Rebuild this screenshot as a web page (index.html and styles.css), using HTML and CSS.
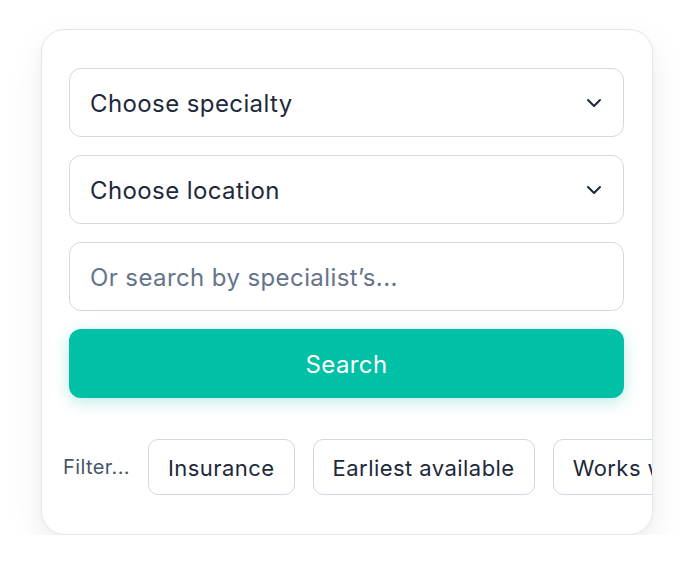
FILE: index.html
```html
<!DOCTYPE html>
<html>
<head>
<meta charset="utf-8">
<link rel="stylesheet" href="styles.css">
</head>
<body>
<div class="card">
  <div class="field select">
    <span class="value">Choose specialty</span>
    <svg class="chev" width="16" height="10" viewBox="0 0 16 10"><path d="M2 2l6 6 6-6" fill="none" stroke="#1e293b" stroke-width="2" stroke-linecap="round" stroke-linejoin="round"/></svg>
  </div>
  <div class="field select">
    <span class="value">Choose location</span>
    <svg class="chev" width="16" height="10" viewBox="0 0 16 10"><path d="M2 2l6 6 6-6" fill="none" stroke="#1e293b" stroke-width="2" stroke-linecap="round" stroke-linejoin="round"/></svg>
  </div>
  <div class="field">
    <span class="placeholder">Or search by specialist’s...</span>
  </div>
  <button class="search">Search</button>
  <div class="filters">
    <span class="label">Filter...</span>
    <span class="chip">Insurance</span>
    <span class="chip">Earliest available</span>
    <span class="chip">Works with children</span>
  </div>
</div>
</body>
</html>
```
FILE: styles.css
```css
* { box-sizing: border-box; }
html, body { margin: 0; background: #fff; }
body {
  font-family: Inter, "Noto Sans", sans-serif;
  padding: 29px 0 0 41px;
}
.card {
  width: 612px;
  height: 506px;
  border: 1.5px solid #e2e8f0;
  border-radius: 24px;
  background: #fff;
  padding: 38px 28px 0 27px;
  display: flex;
  flex-direction: column;
  gap: 18px;
  overflow: hidden;
  box-shadow: 0 14px 36px rgba(15, 23, 42, 0.07), 0 2px 8px rgba(15, 23, 42, 0.03);
}
.field {
  height: 69px;
  border: 1.5px solid #d1d9e4;
  border-radius: 12px;
  display: flex;
  align-items: center;
  justify-content: space-between;
  padding: 2px 21px 0 20px;
  font-size: 24px;
  letter-spacing: 0.4px;
  color: #1e293b;
  flex-shrink: 0;
}
.chev { margin-top: -2px; }
.placeholder { color: #64748b; }
.search {
  height: 69px;
  flex-shrink: 0;
  border: none;
  border-radius: 12px;
  background: #00c0a5;
  color: #fff;
  font-family: inherit;
  font-size: 24px;
  letter-spacing: 0.4px;
  padding-top: 2px;
  box-shadow: 0 4px 16px rgba(0, 192, 165, 0.28);
}
.filters {
  margin-top: 23px;
  margin-left: -6px;
  display: flex;
  align-items: center;
  gap: 18px;
  white-space: nowrap;
}
.label {
  font-size: 20px;
  letter-spacing: 0.4px;
  color: #475569;
}
.chip {
  flex-shrink: 0;
  height: 56px;
  display: flex;
  align-items: center;
  padding: 1px 19px 0;
  border: 1.5px solid #d1d9e4;
  border-radius: 10px;
  font-size: 22px;
  letter-spacing: 0.45px;
  color: #1e293b;
}
```
